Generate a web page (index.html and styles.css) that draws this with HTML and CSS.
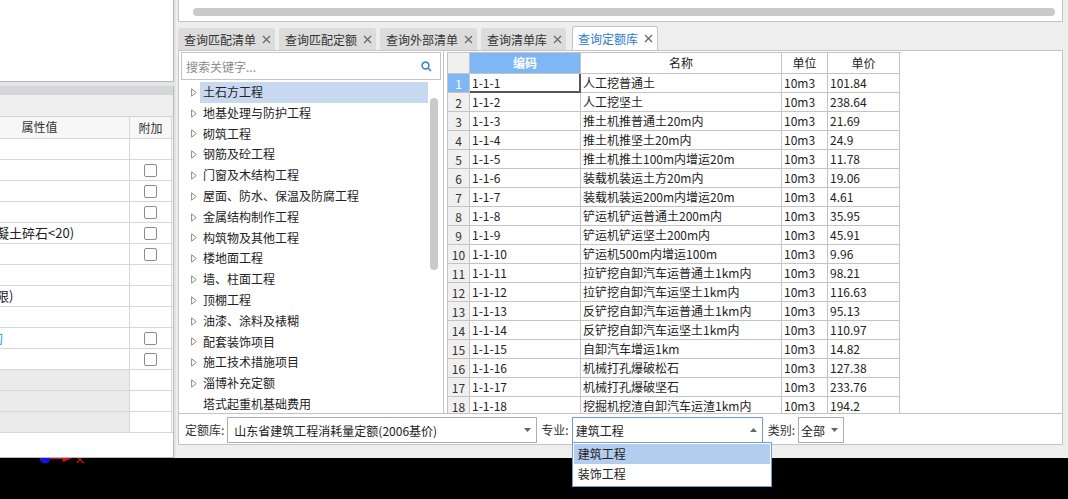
FILE: index.html
```html
<!DOCTYPE html>
<html lang="zh-CN">
<head>
    <meta charset="UTF-8">
    <title>查询定额库</title>
    <link rel="stylesheet" href="styles.css">
</head>
<body>
<div class="app">
    <!-- left: property panel -->
    <aside class="side">
        <div class="side-top"></div>
        <div class="side-body">
            <div class="side-title"></div>
            <div class="side-tools"></div>
            <div class="prop-row prop-head"><div class="prop-name">属性值</div><div class="prop-add">附加</div></div>
            <div class="prop-row"><div class="prop-name"></div><div class="prop-add"></div></div>
            <div class="prop-row"><div class="prop-name"></div><div class="prop-add"><span class="check"></span></div></div>
            <div class="prop-row"><div class="prop-name"></div><div class="prop-add"><span class="check"></span></div></div>
            <div class="prop-row"><div class="prop-name"></div><div class="prop-add"><span class="check"></span></div></div>
            <div class="prop-row"><div class="prop-name cut">凝土碎石&lt;20)</div><div class="prop-add"><span class="check"></span></div></div>
            <div class="prop-row"><div class="prop-name"></div><div class="prop-add"><span class="check"></span></div></div>
            <div class="prop-row"><div class="prop-name"></div><div class="prop-add"></div></div>
            <div class="prop-row"><div class="prop-name cut">限)</div><div class="prop-add"></div></div>
            <div class="prop-row"><div class="prop-name"></div><div class="prop-add"></div></div>
            <div class="prop-row"><div class="prop-name cut-blue">构</div><div class="prop-add"><span class="check"></span></div></div>
            <div class="prop-row"><div class="prop-name"></div><div class="prop-add"><span class="check"></span></div></div>
            <div class="prop-row shaded"><div class="prop-name"></div><div class="prop-add"></div></div>
            <div class="prop-row shaded"><div class="prop-name"></div><div class="prop-add"></div></div>
            <div class="prop-row shaded"><div class="prop-name"></div><div class="prop-add"></div></div>
        </div>
    </aside>

    <main class="main">
        <div class="hscroll"><div class="hscroll-thumb"></div></div>

        <div class="tabs">
            <div class="tab">查询匹配清单<svg class="tab-close" viewBox="0 0 9 9"><path d="M1 1L8 8M8 1L1 8"/></svg></div>
            <div class="tab">查询匹配定额<svg class="tab-close" viewBox="0 0 9 9"><path d="M1 1L8 8M8 1L1 8"/></svg></div>
            <div class="tab">查询外部清单<svg class="tab-close" viewBox="0 0 9 9"><path d="M1 1L8 8M8 1L1 8"/></svg></div>
            <div class="tab">查询清单库<svg class="tab-close" viewBox="0 0 9 9"><path d="M1 1L8 8M8 1L1 8"/></svg></div>
            <div class="tab tab-active">查询定额库<svg class="tab-close" viewBox="0 0 9 9"><path d="M1 1L8 8M8 1L1 8"/></svg></div>
        </div>

        <div class="content">
            <div class="panes">
                <div class="tree-pane">
                    <div class="search">
                        <span>搜索关键字...</span>
                        <svg class="search-icon" viewBox="0 0 11 11"><circle cx="4.5" cy="4.5" r="3.4"/><path d="M7 7L10 10"/></svg>
                    </div>
                    <div class="tree">
                        <ul class="tree-list">
                            <li class="tree-item selected"><svg class="tree-arrow" viewBox="0 0 6 9"><path d="M0.6 0.8L5.2 4.5L0.6 8.2Z"/></svg><span class="tree-label">土石方工程</span></li>
                            <li class="tree-item"><svg class="tree-arrow" viewBox="0 0 6 9"><path d="M0.6 0.8L5.2 4.5L0.6 8.2Z"/></svg><span class="tree-label">地基处理与防护工程</span></li>
                            <li class="tree-item"><svg class="tree-arrow" viewBox="0 0 6 9"><path d="M0.6 0.8L5.2 4.5L0.6 8.2Z"/></svg><span class="tree-label">砌筑工程</span></li>
                            <li class="tree-item"><svg class="tree-arrow" viewBox="0 0 6 9"><path d="M0.6 0.8L5.2 4.5L0.6 8.2Z"/></svg><span class="tree-label">钢筋及砼工程</span></li>
                            <li class="tree-item"><svg class="tree-arrow" viewBox="0 0 6 9"><path d="M0.6 0.8L5.2 4.5L0.6 8.2Z"/></svg><span class="tree-label">门窗及木结构工程</span></li>
                            <li class="tree-item"><svg class="tree-arrow" viewBox="0 0 6 9"><path d="M0.6 0.8L5.2 4.5L0.6 8.2Z"/></svg><span class="tree-label">屋面、防水、保温及防腐工程</span></li>
                            <li class="tree-item"><svg class="tree-arrow" viewBox="0 0 6 9"><path d="M0.6 0.8L5.2 4.5L0.6 8.2Z"/></svg><span class="tree-label">金属结构制作工程</span></li>
                            <li class="tree-item"><svg class="tree-arrow" viewBox="0 0 6 9"><path d="M0.6 0.8L5.2 4.5L0.6 8.2Z"/></svg><span class="tree-label">构筑物及其他工程</span></li>
                            <li class="tree-item"><svg class="tree-arrow" viewBox="0 0 6 9"><path d="M0.6 0.8L5.2 4.5L0.6 8.2Z"/></svg><span class="tree-label">楼地面工程</span></li>
                            <li class="tree-item"><svg class="tree-arrow" viewBox="0 0 6 9"><path d="M0.6 0.8L5.2 4.5L0.6 8.2Z"/></svg><span class="tree-label">墙、柱面工程</span></li>
                            <li class="tree-item"><svg class="tree-arrow" viewBox="0 0 6 9"><path d="M0.6 0.8L5.2 4.5L0.6 8.2Z"/></svg><span class="tree-label">顶棚工程</span></li>
                            <li class="tree-item"><svg class="tree-arrow" viewBox="0 0 6 9"><path d="M0.6 0.8L5.2 4.5L0.6 8.2Z"/></svg><span class="tree-label">油漆、涂料及裱糊</span></li>
                            <li class="tree-item"><svg class="tree-arrow" viewBox="0 0 6 9"><path d="M0.6 0.8L5.2 4.5L0.6 8.2Z"/></svg><span class="tree-label">配套装饰项目</span></li>
                            <li class="tree-item"><svg class="tree-arrow" viewBox="0 0 6 9"><path d="M0.6 0.8L5.2 4.5L0.6 8.2Z"/></svg><span class="tree-label">施工技术措施项目</span></li>
                            <li class="tree-item"><svg class="tree-arrow" viewBox="0 0 6 9"><path d="M0.6 0.8L5.2 4.5L0.6 8.2Z"/></svg><span class="tree-label">淄博补充定额</span></li>
                            <li class="tree-item leaf"><svg class="tree-arrow" viewBox="0 0 6 9"></svg><span class="tree-label">塔式起重机基础费用</span></li>
                        </ul>
                        <div class="vscroll"><div class="vscroll-thumb"></div></div>
                    </div>
                </div>

                <div class="grid-pane">
                    <div class="grid">
                        <div class="grid-row grid-head"><div class="num"></div><div class="hl">编码</div><div>名称</div><div>单位</div><div>单价</div></div>
                        <div class="grid-row"><div class="num hl">1</div><div class="focus">1-1-1</div><div>人工挖普通土</div><div>10m3</div><div>101.84</div></div>
                        <div class="grid-row"><div class="num">2</div><div>1-1-2</div><div>人工挖坚土</div><div>10m3</div><div>238.64</div></div>
                        <div class="grid-row"><div class="num">3</div><div>1-1-3</div><div>推土机推普通土20m内</div><div>10m3</div><div>21.69</div></div>
                        <div class="grid-row"><div class="num">4</div><div>1-1-4</div><div>推土机推坚土20m内</div><div>10m3</div><div>24.9</div></div>
                        <div class="grid-row"><div class="num">5</div><div>1-1-5</div><div>推土机推土100m内增运20m</div><div>10m3</div><div>11.78</div></div>
                        <div class="grid-row"><div class="num">6</div><div>1-1-6</div><div>装载机装运土方20m内</div><div>10m3</div><div>19.06</div></div>
                        <div class="grid-row"><div class="num">7</div><div>1-1-7</div><div>装载机装运200m内增运20m</div><div>10m3</div><div>4.61</div></div>
                        <div class="grid-row"><div class="num">8</div><div>1-1-8</div><div>铲运机铲运普通土200m内</div><div>10m3</div><div>35.95</div></div>
                        <div class="grid-row"><div class="num">9</div><div>1-1-9</div><div>铲运机铲运坚土200m内</div><div>10m3</div><div>45.91</div></div>
                        <div class="grid-row"><div class="num">10</div><div>1-1-10</div><div>铲运机500m内增运100m</div><div>10m3</div><div>9.96</div></div>
                        <div class="grid-row"><div class="num">11</div><div>1-1-11</div><div>拉铲挖自卸汽车运普通土1km内</div><div>10m3</div><div>98.21</div></div>
                        <div class="grid-row"><div class="num">12</div><div>1-1-12</div><div>拉铲挖自卸汽车运坚土1km内</div><div>10m3</div><div>116.63</div></div>
                        <div class="grid-row"><div class="num">13</div><div>1-1-13</div><div>反铲挖自卸汽车运普通土1km内</div><div>10m3</div><div>95.13</div></div>
                        <div class="grid-row"><div class="num">14</div><div>1-1-14</div><div>反铲挖自卸汽车运坚土1km内</div><div>10m3</div><div>110.97</div></div>
                        <div class="grid-row"><div class="num">15</div><div>1-1-15</div><div>自卸汽车增运1km</div><div>10m3</div><div>14.82</div></div>
                        <div class="grid-row"><div class="num">16</div><div>1-1-16</div><div>机械打孔爆破松石</div><div>10m3</div><div>127.38</div></div>
                        <div class="grid-row"><div class="num">17</div><div>1-1-17</div><div>机械打孔爆破坚石</div><div>10m3</div><div>233.76</div></div>
                        <div class="grid-row"><div class="num">18</div><div>1-1-18</div><div>挖掘机挖渣自卸汽车运渣1km内</div><div>10m3</div><div>194.2</div></div>
                    </div>
                </div>
            </div>

            <!-- filter bar -->
            <div class="bar">
                <span class="bar-label">定额库:</span>
                <div class="select select-quota">
                    <span>山东省建筑工程消耗量定额(2006基价)</span>
                    <svg class="caret" viewBox="0 0 7 4"><path d="M0 0H7L3.5 4Z"/></svg>
                </div>
                <span class="bar-label">专业:</span>
                <div class="select select-major">
                    <span>建筑工程</span>
                    <svg class="caret" viewBox="0 0 7 4"><path d="M0 4H7L3.5 0Z"/></svg>
                    <div class="dropdown">
                        <div class="dropdown-item active">建筑工程</div>
                        <div class="dropdown-item">装饰工程</div>
                    </div>
                </div>
                <span class="bar-label bar-label-type">类别:</span>
                <div class="select select-type">
                    <span>全部</span>
                    <svg class="caret" viewBox="0 0 7 4"><path d="M0 0H7L3.5 4Z"/></svg>
                </div>
            </div>
        </div>
    </main>
</div>

<div class="taskbar">
    <svg class="taskbar-marks" width="100" height="6" viewBox="0 0 100 6">
        <path d="M39.5 0A5.5 5.5 0 0 0 50.5 0Z" fill="#1414d8"/>
        <path d="M50 0.5H66" stroke="#e01010" stroke-width="1"/>
        <path d="M62 0L72 0L63 4Z" fill="#e01010"/>
        <path d="M78 0L84 5M81 0L77 5" stroke="#e01010" stroke-width="1.2" fill="none"/>
    </svg>
</div>
</body>
</html>
```

FILE: styles.css
```css
body {
    margin: 0;
    width: 1068px;
    height: 499px;
    overflow: hidden;
    background: #000;
    font-family: "Noto Sans CJK SC", "Microsoft YaHei", sans-serif;
    font-size: 12px;
    color: #222;
}

.app {
    display: flex;
    height: 458px;
    background: #eeeeee;
}

/* left property panel */
.side {
    width: 176px;
    display: flex;
    flex-direction: column;
    background: #e4e4e4;
}

.side-top {
    width: 174px;
    height: 82px;
    box-sizing: border-box;
    background: #fff;
    border-right: 1px solid #b8b8b8;
    border-bottom: 1px solid #b8b8b8;
}

.side-body {
    width: 174px;
    margin-top: 4px;
    flex: 1;
    box-sizing: border-box;
    background: #fff;
    border-right: 1px solid #b8b8b8;
    border-bottom: 1px solid #b8b8b8;
    overflow: hidden;
}

.side-title {
    height: 9px;
    background: #d5d6da;
}

.side-tools {
    height: 22px;
    box-sizing: border-box;
    background: #eeeeee;
    border-bottom: 1px solid #d2d2d2;
}

.prop-row {
    display: flex;
    height: 21px;
    box-sizing: border-box;
    border-bottom: 1px solid #d6d6d6;
}

.prop-head {
    height: 22px;
    background: #f7f7f7;
    color: #333;
}

.prop-name {
    width: 130px;
    box-sizing: border-box;
    border-right: 1px solid #d6d6d6;
    overflow: hidden;
    white-space: nowrap;
    font-size: 13px;
    line-height: 20px;
}

.prop-head .prop-name {
    font-size: 12px;
    text-align: center;
    padding-right: 50px;
}

.prop-add {
    width: 42px;
    box-sizing: border-box;
    border-right: 1px solid #d6d6d6;
    display: flex;
    align-items: center;
    justify-content: center;
}

.prop-head .prop-add {
    font-size: 12px;
}

.prop-name.cut {
    text-indent: -4px;
}

.prop-name.cut-blue {
    text-indent: -10px;
    color: #2ea6ea;
}

.prop-row.shaded .prop-name {
    background: #ebebeb;
}

.check {
    width: 13px;
    height: 13px;
    box-sizing: border-box;
    border: 1px solid #8c8c8c;
    border-radius: 2px;
}

/* main area */
.main {
    flex: 1;
    display: flex;
    flex-direction: column;
    padding: 0 5px 0 2px;
}

.hscroll {
    height: 22px;
    box-sizing: border-box;
    background: #fff;
    border: 1px solid #c4c4c4;
    border-top: 0;
    padding: 8px 7px 0 14px;
}

.hscroll-thumb {
    height: 8px;
    border-radius: 4px;
    background: #c9c9c9;
}

.tabs {
    display: flex;
    align-items: flex-end;
    gap: 4px;
    height: 24px;
    margin-top: 4px;
}

.tab {
    display: flex;
    align-items: center;
    height: 22px;
    box-sizing: border-box;
    padding: 0 4px 0 6px;
    background: #dcdcdc;
    border-radius: 3px 3px 0 0;
    color: #333;
    white-space: nowrap;
}

.tab-close {
    width: 9px;
    height: 9px;
    margin-left: 6px;
    stroke: #666;
    stroke-width: 1.2;
    fill: none;
}

.tab-active {
    height: 24px;
    margin-left: 2px;
    padding: 0 4px 0 5px;
    background: #fff;
    border: 1px solid #c4c4c4;
    border-bottom: 0;
    color: #2f7bd5;
}

.content {
    height: 395px;
    box-sizing: border-box;
    border: 1px solid #c4c4c4;
    background: #fff;
    display: flex;
    flex-direction: column;
}

.panes {
    display: flex;
    height: 362px;
    overflow: hidden;
}

/* tree */
.tree-pane {
    width: 265px;
    box-sizing: border-box;
    border-right: 1px solid #c4c4c4;
    display: flex;
    flex-direction: column;
}

.search {
    margin: 1px 2px 0;
    height: 28px;
    box-sizing: border-box;
    border: 1px solid #c4c4c4;
    display: flex;
    align-items: center;
    justify-content: space-between;
    padding: 0 8px 0 4px;
    color: #8c8c8c;
}

.search-icon {
    width: 11px;
    height: 11px;
    fill: none;
    stroke: #3a86c8;
    stroke-width: 1.6;
}

.tree {
    display: flex;
    flex: 1;
    overflow: hidden;
}

.tree-list {
    list-style: none;
    margin: 0;
    padding: 2px 0 0;
    width: 249px;
    flex: none;
}

.tree-item {
    display: flex;
    align-items: center;
    height: 20.8px;
    padding-left: 12px;
}

.tree-arrow {
    width: 6px;
    height: 9px;
    margin-right: 3px;
    flex: none;
    fill: none;
    stroke: #8a8a8a;
    stroke-width: 1;
}

.tree-label {
    flex: 1;
    height: 20.8px;
    line-height: 20.8px;
    padding-left: 3px;
    white-space: nowrap;
}

.tree-item.selected .tree-label {
    background: #c7d9f0;
}

.vscroll {
    width: 15px;
    padding: 18px 0 0 2px;
    box-sizing: border-box;
}

.vscroll-thumb {
    width: 8px;
    height: 172px;
    border-radius: 4px;
    background: #c9c9c9;
}

/* grid */
.grid-pane {
    flex: 1;
    padding: 1px 0 0 3px;
    overflow: hidden;
}

.grid {
    width: 453px;
    border-left: 1px solid #c4c4c4;
    border-top: 1px solid #c4c4c4;
}

.grid-row {
    display: grid;
    grid-template-columns: 22px 111px 201px 46px 72px;
    height: 19px;
}

.grid-row > div {
    box-sizing: border-box;
    border-right: 1px solid #c4c4c4;
    border-bottom: 1px solid #c4c4c4;
    padding-left: 2px;
    line-height: 18px;
    white-space: nowrap;
    overflow: hidden;
}

.grid-head {
    height: 21px;
}

.grid-head > div {
    text-align: center;
    line-height: 20px;
    padding-left: 0;
}

.grid-row .num {
    background: #f0f0f0;
    text-align: center;
    padding: 1px 0 0;
    color: #333;
}

.grid-row .hl {
    background: #7fb7f4;
    color: #fff;
}

.grid-head .hl {
    font-weight: bold;
}

.grid-row .focus {
    border-right-color: #555;
    border-bottom-color: #555;
    box-shadow: inset -1px -1px 0 #555;
}

/* filter bar */
.bar {
    height: 31px;
    box-sizing: border-box;
    border-top: 1px solid #c4c4c4;
    display: flex;
    align-items: flex-start;
    padding: 3px 0 0 6px;
}

.bar-label {
    line-height: 26px;
    color: #333;
}

.select {
    height: 26px;
    box-sizing: border-box;
    border: 1px solid #adadad;
    display: flex;
    align-items: center;
    justify-content: space-between;
    padding: 0 5px 0 6px;
    background: #fff;
}

.caret {
    width: 7px;
    height: 4px;
    fill: #666;
}

.select-quota {
    width: 310px;
    margin: 0 4px 0 3px;
}

.select-major {
    width: 191px;
    margin-left: 3px;
    padding-left: 3px;
    border-color: #6f9bd8;
    position: relative;
}

.bar-label-type {
    margin-left: 5px;
}

.select-type {
    width: 46px;
    margin-left: 3px;
    padding-left: 2px;
}

.dropdown {
    position: absolute;
    left: -1px;
    top: 24px;
    width: 200px;
    height: 45px;
    box-sizing: border-box;
    border: 1px solid #6f9bd8;
    background: #fff;
    padding: 1px;
    z-index: 5;
}

.dropdown-item {
    height: 20px;
    line-height: 20px;
    padding-left: 4px;
}

.dropdown-item.active {
    background: #b3cdef;
}

.taskbar {
    height: 41px;
}

.taskbar-marks {
    display: block;
}
```
